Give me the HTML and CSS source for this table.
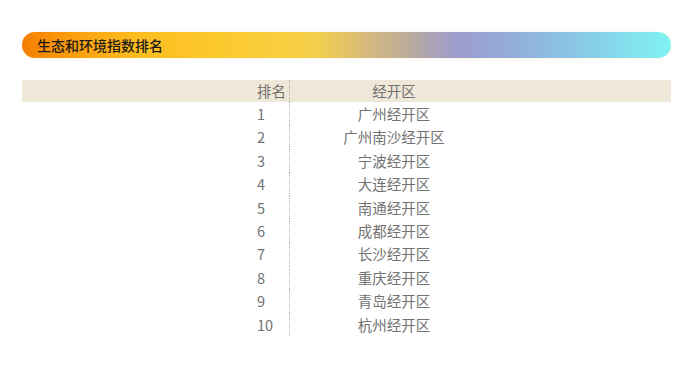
FILE: index.html
```html
<!DOCTYPE html>
<html lang="zh">
<head>
<meta charset="utf-8">
<link rel="stylesheet" href="styles.css">
</head>
<body>
<div class="page">
  <div class="banner">生态和环境指数排名</div>
  <div class="table">
    <div class="row head"><div class="rank">排名</div><div class="name">经开区</div></div>
    <div class="row"><div class="rank">1</div><div class="name">广州经开区</div></div>
    <div class="row"><div class="rank">2</div><div class="name">广州南沙经开区</div></div>
    <div class="row"><div class="rank">3</div><div class="name">宁波经开区</div></div>
    <div class="row"><div class="rank">4</div><div class="name">大连经开区</div></div>
    <div class="row"><div class="rank">5</div><div class="name">南通经开区</div></div>
    <div class="row"><div class="rank">6</div><div class="name">成都经开区</div></div>
    <div class="row"><div class="rank">7</div><div class="name">长沙经开区</div></div>
    <div class="row"><div class="rank">8</div><div class="name">重庆经开区</div></div>
    <div class="row"><div class="rank">9</div><div class="name">青岛经开区</div></div>
    <div class="row"><div class="rank">10</div><div class="name">杭州经开区</div></div>
  </div>
</div>
</body>
</html>
```
FILE: styles.css
```css
html, body {
  margin: 0;
  padding: 0;
  background: #ffffff;
}
.page {
  width: 700px;
  height: 387px;
  padding: 32px 29px 0 22px;
  box-sizing: border-box;
  font-family: "Noto Sans CJK SC", "Noto Sans", sans-serif;
}
.banner {
  height: 26px;
  border-radius: 13px;
  padding-left: 15px;
  font-size: 14px;
  font-weight: 500;
  line-height: 26px;
  color: #1e1a14;
  background: linear-gradient(90deg,
    #f57f02 0%,
    #fa9c0e 7%,
    #fdbd1f 18%,
    #fbcb32 33%,
    #f5d04a 45%,
    #d8bb7c 53%,
    #b8aaa0 60%,
    #9d9ccc 67%,
    #92aedb 76%,
    #88cce6 87%,
    #7ff3f4 100%);
  box-shadow: 0 0 2px rgba(250, 180, 60, 0.35);
}
.table {
  margin-top: 22px;
  color: #727272;
  font-size: 14.5px;
}
.row {
  display: flex;
  height: 23.4px;
  line-height: 23.4px;
}
.row.head {
  height: 22px;
  line-height: 22px;
  background: #efe7d8;
}
.rank {
  margin-left: 235px;
  width: 32px;
  border-right: 1px dotted #b4aea6;
}
.name {
  width: 208px;
  text-align: center;
}
```
